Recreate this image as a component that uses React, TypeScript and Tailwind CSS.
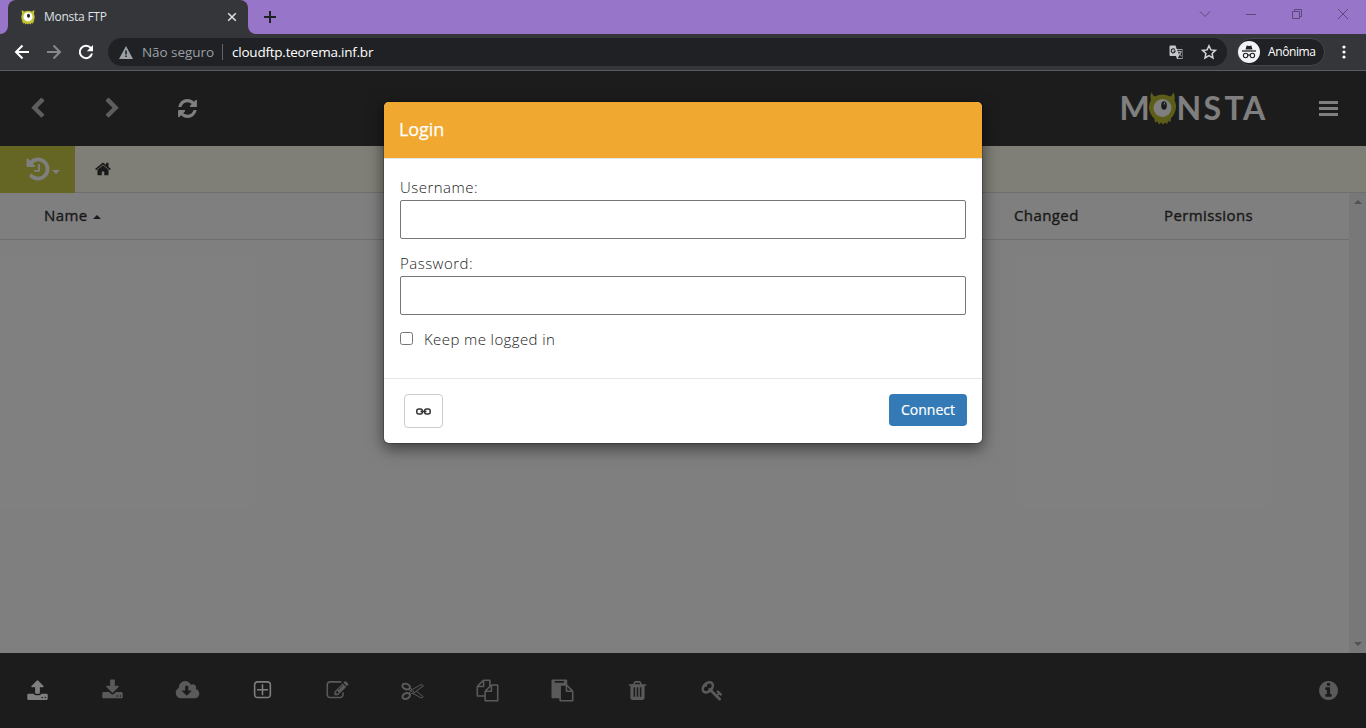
import { useState, type FormEvent, type ReactNode } from "react";
import clsx from "clsx";

type GlyphProps = {
  d: string;
  size?: number;
  className?: string;
};

// ── Icon outlines (1792 grid) ───────────────────────────────────────────────
const ICONS = {
  chevronLeft:
    "M1427 301l-531 531 531 531q19 19 19 45t-19 45l-166 166q-19 19-45 19t-45-19l-742-742q-19-19-19-45t19-45l742-742q19-19 45-19t45 19l166 166q19 19 19 45t-19 45z",
  chevronRight:
    "M1363 877l-742 742q-19 19-45 19t-45-19l-166-166q-19-19-19-45t19-45l531-531-531-531q-19-19-19-45t19-45l166-166q19-19 45-19t45 19l742 742q19 19 19 45t-19 45z",
  refresh:
    "M1639 1056q0 5-1 7-64 268-268 434.5t-478 166.5q-146 0-282.5-55t-243.5-157l-129 129q-19 19-45 19t-45-19-19-45v-448q0-26 19-45t45-19h448q26 0 45 19t19 45-19 45l-137 137q71 66 161 102t187 36q134 0 250-65t186-179q11-17 53-117 8-23 30-23h192q13 0 22.5 9.5t9.5 22.5zm25-800v448q0 26-19 45t-45 19h-448q-26 0-45-19t-19-45 19-45l138-138q-148-137-349-137-134 0-250 65t-186 179q-11 17-53 117-8 23-30 23h-199q-13 0-22.5-9.5t-9.5-22.5v-7q65-268 270-434.5t480-166.5q146 0 284 55.5t245 156.5l130-129q19-19 45-19t45 19 19 45z",
  history:
    "M1664 896q0 156-61 298t-164 245-245 164-298 61q-172 0-327-72.5t-264-204.5q-7-10-6.5-22.5t8.5-20.5l137-138q10-9 25-9 16 2 23 12 73 95 179 147t225 52q104 0 198.5-40.5t163.5-109.5 109.5-163.5 40.5-198.5-40.5-198.5-109.5-163.5-163.5-109.5-198.5-40.5q-98 0-188 35.5t-160 101.5l137 138q31 30 14 69-17 40-59 40h-448q-26 0-45-19t-19-45v-448q0-42 40-59 39-17 69 14l130 129q107-101 244.5-156.5t284.5-55.5q156 0 298 61t245 164 164 245 61 298zm-640-288v448q0 14-9 23t-23 9h-320q-14 0-23-9t-9-23v-64q0-14 9-23t23-9h224v-352q0-14 9-23t23-9h64q14 0 23 9t9 23z",
  home: "M1472 992v480q0 26-19 45t-45 19h-384v-384h-256v384h-384q-26 0-45-19t-19-45v-480q0-1 .5-3t.5-3l575-474 575 474q1 2 1 6zm223-69l-62 74q-8 9-21 11h-3q-13 0-21-7l-692-577-692 577q-12 8-24 7-13-2-21-11l-62-74q-8-10-7-23.5t11-21.5l719-599q32-26 76-26t76 26l244 204v-195q0-14 9-23t23-9h192q14 0 23 9t9 23v408l219 182q10 8 11 21.5t-7 23.5z",
  upload:
    "M1344 1472q0-26-19-45t-45-19-45 19-19 45 19 45 45 19 45-19 19-45zm256 0q0-26-19-45t-45-19-45 19-19 45 19 45 45 19 45-19 19-45zm128-224v320q0 40-28 68t-68 28h-1472q-40 0-68-28t-28-68v-320q0-40 28-68t68-28h427q21 56 70.5 92t110.5 36h256q61 0 110.5-36t70.5-92h427q40 0 68 28t28 68zm-325-648q-17 40-59 40h-256v448q0 26-19 45t-45 19h-256q-26 0-45-19t-19-45v-448h-256q-42 0-59-40-17-39 14-69l448-448q18-19 45-19t45 19l448 448q31 30 14 69z",
  download:
    "M1344 1344q0-26-19-45t-45-19-45 19-19 45 19 45 45 19 45-19 19-45zm256 0q0-26-19-45t-45-19-45 19-19 45 19 45 45 19 45-19 19-45zm128-224v320q0 40-28 68t-68 28h-1472q-40 0-68-28t-28-68v-320q0-40 28-68t68-28h465l135 136q58 56 136 56t136-56l136-136h464q40 0 68 28t28 68zm-325-569q17 41-14 70l-448 448q-18 19-45 19t-45-19l-448-448q-31-29-14-70 17-39 59-39h256v-448q0-26 19-45t45-19h256q26 0 45 19t19 45v448h256q42 0 59 39z",
  cloudDownload:
    "M1216 928q0-14-9-23t-23-9h-224v-352q0-13-9.5-22.5t-22.5-9.5h-192q-13 0-22.5 9.5t-9.5 22.5v352h-224q-13 0-22.5 9.5t-9.5 22.5q0 14 9 23l352 352q9 9 23 9t23-9l351-351q10-12 10-24zm640 224q0 159-112.5 271.5t-271.5 112.5h-1088q-185 0-316.5-131.5t-131.5-316.5q0-130 70-240t188-165q-2-30-2-43 0-212 150-362t362-150q156 0 285.5 87t188.5 231q71-62 166-62 106 0 181 75t75 181q0 76-41 138 130 31 213.5 135.5t83.5 238.5z",
  plusSquare:
    "M1344 800v64q0 14-9 23t-23 9h-352v352q0 14-9 23t-23 9h-64q-14 0-23-9t-9-23v-352h-352q-14 0-23-9t-9-23v-64q0-14 9-23t23-9h352v-352q0-14 9-23t23-9h64q14 0 23 9t9 23v352h352q14 0 23 9t9 23zm128 448v-832q0-66-47-113t-113-47h-832q-66 0-113 47t-47 113v832q0 66 47 113t113 47h832q66 0 113-47t47-113zm128-832v832q0 119-84.5 203.5t-203.5 84.5h-832q-119 0-203.5-84.5t-84.5-203.5v-832q0-119 84.5-203.5t203.5-84.5h832q119 0 203.5 84.5t84.5 203.5z",
  edit: "M888 1184l116-116-152-152-116 116v56h96v96h56zm440-720q-16-16-33 1l-350 350q-17 17-1 33t33-1l350-350q17-17 1-33zm80 594v190q0 119-84.5 203.5t-203.5 84.5h-832q-119 0-203.5-84.5t-84.5-203.5v-832q0-119 84.5-203.5t203.5-84.5h832q63 0 117 25 15 7 18 23 3 17-9 29l-49 49q-14 14-32 8-23-6-45-6h-832q-66 0-113 47t-47 113v832q0 66 47 113t113 47h832q66 0 113-47t47-113v-126q0-13 9-22l64-64q15-15 35-7t20 29zm-96-738l288 288-672 672h-288v-288zm444 132l-92 92-288-288 92-92q28-28 68-28t68 28l152 152q28 28 28 68t-28 68z",
  scissors:
    "M960 896q26 0 45 19t19 45-19 45-45 19-45-19-19-45 19-45 45-19zm300 64l507 398q28 20 25 56-5 35-35 51l-128 64q-13 7-29 7-17 0-31-8l-690-387-110 66q-8 4-12 5 14 49 10 97-7 77-56 147.5t-132 123.5q-132 84-277 84-136 0-222-78-90-84-79-207 7-76 56-147t131-124q132-84 278-84 83 0 151 31 9-13 22-22l122-73-122-73q-13-9-22-22-68 31-151 31-146 0-278-84-82-53-131-124t-56-147q-5-59 15.5-113t63.5-93q85-79 222-79 145 0 277 84 83 52 132 123t56 148q4 48-10 97 4 1 12 5l110 66 690-387q14-8 31-8 16 0 29 7l128 64q30 16 35 51 3 36-25 56zm-681-260q46-42 21-108t-106-117q-92-59-192-59-74 0-113 36-46 42-21 108t106 117q92 59 192 59 74 0 113-36zm-85 745q81-51 106-117t-21-108q-39-36-113-36-100 0-192 59-81 51-106 117t21 108q39 36 113 36 100 0 192-59zm178-613l96 58v-11q0-36 33-56l14-8-79-44-26 26q-3 3-10 11t-12 12q-2 2-4 3.5t-3 2.5zm224 224l96 32 736-576-128-64-768 431v113l-160 96 9 8q2 2 7 6 4 4 11 12t11 12l26 26zm704 416l128-64-520-408-177 138q-2 3-13 7z",
  copy: "M1696 384q40 0 68 28t28 68v1216q0 40-28 68t-68 28h-960q-40 0-68-28t-28-68v-288h-544q-40 0-68-28t-28-68v-672q0-40 20-88t48-76l408-408q28-28 76-48t88-20h416q40 0 68 28t28 68v328q68-40 128-40h416zm-544 213l-299 299h299v-299zm-640-384l-299 299h299v-299zm196 647l316-316v-416h-384v416q0 40-28 68t-68 28h-416v640h512v-256q0-40 20-88t48-76zm956 804v-1152h-384v416q0 40-28 68t-68 28h-416v640h896z",
  paste:
    "M768 1664h896v-640h-416q-40 0-68-28t-28-68v-416h-384v1152zm256-1440v-64q0-13-9.5-22.5t-22.5-9.5h-704q-13 0-22.5 9.5t-9.5 22.5v64q0 13 9.5 22.5t22.5 9.5h704q13 0 22.5-9.5t9.5-22.5zm256 672h299l-299-299v299zm512 128v672q0 40-28 68t-68 28h-960q-40 0-68-28t-28-68v-160h-544q-40 0-68-28t-28-68v-1344q0-40 28-68t68-28h1088q40 0 68 28t28 68v328q21 13 36 28l408 408q28 28 48 76t20 88z",
  trash:
    "M704 1376v-704q0-14-9-23t-23-9h-64q-14 0-23 9t-9 23v704q0 14 9 23t23 9h64q14 0 23-9t9-23zm256 0v-704q0-14-9-23t-23-9h-64q-14 0-23 9t-9 23v704q0 14 9 23t23 9h64q14 0 23-9t9-23zm256 0v-704q0-14-9-23t-23-9h-64q-14 0-23 9t-9 23v704q0 14 9 23t23 9h64q14 0 23-9t9-23zm-544-992h448l-48-117q-7-9-17-11h-317q-10 2-17 11zm928 32v64q0 14-9 23t-23 9h-96v948q0 83-47 143.5t-113 60.5h-832q-66 0-113-58.5t-47-141.5v-952h-96q-14 0-23-9t-9-23v-64q0-14 9-23t23-9h309l70-167q15-37 54-63t79-26h320q40 0 79 26t54 63l70 167h309q14 0 23 9t9 23z",
  key: "M832 512q0-80-56-136t-136-56-136 56-56 136q0 42 19 83-41-19-83-19-80 0-136 56t-56 136 56 136 136 56 136-56 56-136q0-42-19-83 41 19 83 19 80 0 136-56t56-136zm851 704q0 17-49 66t-66 49q-9 0-28.5-16t-36.5-33-38.5-40-24.5-26l-96 96 220 220q28 28 28 68 0 42-39 81t-81 39q-40 0-68-28l-671-671q-176 131-365 131-163 0-265.5-102.5t-102.5-265.5q0-160 95-313t248-248 313-95q163 0 265.5 102.5t102.5 265.5q0 189-131 365l355 355 96-96q-3-3-26-24.5t-40-38.5-33-36.5-16-28.5q0-17 49-66t66-49q13 0 23 10 6 6 46 44.5t82 79.5 86.5 86 73 78 28.5 41z",
  info: "M1152 1376v-160q0-14-9-23t-23-9h-96v-512q0-14-9-23t-23-9h-320q-14 0-23 9t-9 23v160q0 14 9 23t23 9h96v320h-96q-14 0-23 9t-9 23v160q0 14 9 23t23 9h448q14 0 23-9t9-23zm-128-896v-160q0-14-9-23t-23-9h-192q-14 0-23 9t-9 23v160q0 14 9 23t23 9h192q14 0 23-9t9-23zm640 416q0 209-103 385.5t-279.5 279.5-385.5 103-385.5-103-279.5-279.5-103-385.5 103-385.5 279.5-279.5 385.5-103 385.5 103 279.5 279.5 103 385.5z",
};

// Half a pixel of room on each side keeps 22px icons centred in odd-width slots.
function Glyph({ d, size = 23, className }: GlyphProps) {
  return (
    <svg
      width={size}
      height={size}
      viewBox="-41 -41 1874 1874"
      fill="currentColor"
      className={clsx("shrink-0 overflow-visible", className)}
    >
      <path d={d} />
    </svg>
  );
}

// ── Browser chrome ──────────────────────────────────────────────────────────
function TabStrip() {
  return (
    <div className="flex h-[34px] items-stretch bg-[#9775c8]">
      <svg width="8" height="34" className="shrink-0">
        <path d="M8 26a8 8 0 0 1-8 8h8z" fill="#35363a" />
      </svg>
      <div className="flex w-[240px] items-center rounded-t-lg bg-[#35363a] pl-3 pr-[11px]">
        <svg width="16" height="16" viewBox="0 0 16 16">
          <path
            d="M1.6 1l2.6 1.6Q8 .8 11.800 2.600L14.400 1l-.4 3.800q1.700 3.600 0 6.800l-1 2.900-1.500-.6-1 1.600-1.300-.9-1.200 1-1.200-1-1.300.9-1-1.600-1.500.6-1-2.900q-1.700-3.200 0-6.800z"
            fill="#bfc233"
          />
          <circle cx="8" cy="7.800" r="4.600" fill="#fff" />
          <ellipse cx="8.500" cy="6.800" rx="1.500" ry="2" fill="#222" />
        </svg>
        <span className="ml-2 flex-1 text-[12px] tracking-[-0.25px] text-[#dee1e6]">
          Monsta FTP
        </span>
        <svg width="10" height="10" stroke="#dee1e6" strokeWidth="1.500">
          <path d="M1.200 1.200l7.600 7.600M8.800 1.200l-7.600 7.600" />
        </svg>
      </div>
      <svg width="8" height="34" className="shrink-0">
        <path d="M0 26a8 8 0 0 0 8 8H0z" fill="#35363a" />
      </svg>
      <svg
        width="12"
        height="12"
        stroke="#202124"
        strokeWidth="2"
        className="ml-2 mt-[11px]"
      >
        <path d="M6 0v12M0 6h12" />
      </svg>
      <div className="ml-auto flex items-start gap-[34px] pr-[17px] pt-2 text-[#5d487c]">
        <svg width="12" height="12" fill="none" stroke="currentColor">
          <path d="M1 3.500l5 5 5-5" />
        </svg>
        <svg width="12" height="12" fill="none" stroke="currentColor">
          <path d="M1 6.500h10" />
        </svg>
        <svg width="12" height="12" fill="none" stroke="currentColor">
          <path d="M1.500 3.500h7v7h-7zM3.500 3.500v-2h7v7h-2" />
        </svg>
        <svg width="12" height="12" fill="none" stroke="currentColor">
          <path d="M1 1l10 10M11 1L1 11" />
        </svg>
      </div>
    </div>
  );
}

function AddressBar() {
  return (
    <div className="flex h-[37px] items-center border-b border-[#5b5c60] bg-[#35363a] pl-[14px] pr-5">
      <svg width="16" height="16" fill="none" stroke="#fff" strokeWidth="2">
        <path d="M15 8H2M8.500 1.500L2 8l6.500 6.500" />
      </svg>
      <svg
        width="16"
        height="16"
        fill="none"
        stroke="#87888b"
        strokeWidth="2"
        className="ml-4"
      >
        <path d="M1 8h13M7.500 1.500L14 8l-6.500 6.500" />
      </svg>
      <svg width="16" height="16" fill="none" className="ml-4">
        <path
          d="M12.800 4A6.200 6.200 0 1 0 14 9.500"
          stroke="#fff"
          strokeWidth="2"
        />
        <path d="M15 1v6.200H8.800z" fill="#fff" />
      </svg>
      <div className="ml-[14px] flex h-7 flex-1 items-center rounded-full bg-[#202124] pl-[11px] pr-[10px]">
        <svg width="14" height="13" className="shrink-0">
          <path d="M7 0l7 13H0z" fill="#9aa0a6" />
          <path d="M6.200 4.500h1.600v4H6.200zM6.200 9.500h1.600v1.600H6.200z" fill="#202124" />
        </svg>
        <span className="ml-[9px] text-[13.500px] tracking-[-0.05px] text-[#9aa0a6]">
          Não seguro
        </span>
        <span className="ml-2 h-4 w-px bg-[#5f6368]" />
        <span className="ml-[9px] text-[13.500px] tracking-[-0.23px] text-white">
          cloudftp.teorema.inf.br
        </span>
        <svg width="15" height="15" className="ml-auto">
          <path d="M1.500.5h5l1.200 3.500h5.800v10H8L7 11H1.500a1 1 0 0 1-1-1V1.500a1 1 0 0 1 1-1z" fill="#c4c7cb" />
          <path d="M8.200 4.700h5v8.600h-4.500l1.500-2.800z" fill="#202124" />
          <path d="M8.800 6.700h4M10.800 5.700v1M12 7q-.7 2.600-2.600 3.800M9.800 8q1 2 2.800 3" stroke="#c4c7cb" fill="none" strokeWidth=".9" />
          <path d="M5.800 4.600A2 2 0 1 0 6.200 6H4.500" stroke="#202124" fill="none" strokeWidth="1.100" />
        </svg>
        <svg
          width="16"
          height="16"
          fill="none"
          stroke="#d0d3d7"
          strokeWidth="1.500"
          className="ml-[17px]"
        >
          <path d="M8 1.800l1.900 4.100 4.500.5-3.300 3.100.9 4.500-4-2.300L4 14l.9-4.500L1.600 6.400l4.500-.5z" />
        </svg>
      </div>
      <div className="ml-[10px] flex h-7 w-[88px] shrink-0 items-center rounded-full border border-[#45464a] bg-[#202124]">
        <svg width="22" height="22" className="shrink-0">
          <circle cx="11" cy="11" r="11" fill="#f1f3f4" />
          <path d="M7.500 8.500l1.200-4 2.300.6 2.300-.6 1.200 4z" fill="#202124" />
          <path d="M4 10h14" stroke="#202124" strokeWidth="1.300" />
          <g fill="none" stroke="#202124" strokeWidth="1.100">
            <circle cx="7.600" cy="14.500" r="2.200" />
            <circle cx="14.400" cy="14.500" r="2.200" />
            <path d="M9.800 14.300q1.200-.8 2.400 0" />
          </g>
        </svg>
        <span className="ml-2 text-[12px] font-medium tracking-[-0.4px] text-white">
          Anônima
        </span>
      </div>
      <svg width="4" height="16" fill="#fff" className="ml-[17px] shrink-0">
        <circle cx="2" cy="3" r="1.600" />
        <circle cx="2" cy="8" r="1.600" />
        <circle cx="2" cy="13" r="1.600" />
      </svg>
    </div>
  );
}

// ── File manager ────────────────────────────────────────────────────────────
function Logo() {
  return (
    <svg width="154" height="47" viewBox="-4 -7 154 47">
      <g
        fill="#fff"
        fontSize="32"
        className="font-['Lato','Open_Sans',sans-serif] font-bold"
      >
        <text x="-1.600" y="27.500">
          M
        </text>
        <text x="55.500 82.500 103.500 122" y="27.500">
          NSTA
        </text>
      </g>
      <path
        d="M31 0q0 3 3 4.500 7-4 15 0Q52 3 52 0q2.500 3 1.500 8.500 3 6 0 12.500-1 3-3.500 5l-.5 4-2-1-1.500 3-2-1.500-2 2-2-2-2 2-1.500-3-2.500 1-.5-3.500q-2.500-2.500-4-5.500-3.500-7 .5-13.500Q28.500 3 31 0z"
        fill="#b8bb30"
      />
      <circle cx="41.500" cy="16" r="9" fill="#fff" />
      <ellipse cx="43" cy="13.500" rx="2.800" ry="4.300" fill="#393939" />
      <path d="M43.500 10.500v2" stroke="#fff" />
    </svg>
  );
}

function ToolSlot({ children }: { children: ReactNode }) {
  return (
    <button
      type="button"
      className="flex h-[75px] w-[75px] shrink-0 items-center justify-center"
    >
      {children}
    </button>
  );
}

function TopBar() {
  return (
    <header className="flex h-[75px] items-center bg-[#393939] text-white">
      <ToolSlot>
        <Glyph d={ICONS.chevronLeft} className="text-[#bdbdbd]" />
      </ToolSlot>
      <ToolSlot>
        <Glyph d={ICONS.chevronRight} className="text-[#bdbdbd]" />
      </ToolSlot>
      <ToolSlot>
        <Glyph d={ICONS.refresh} />
      </ToolSlot>
      <div className="ml-auto">
        <Logo />
      </div>
      <svg width="19" height="15" fill="currentColor" className="ml-12 mr-7">
        <path d="M0 0h19v3H0zM0 6h19v3H0zM0 12h19v3H0z" />
      </svg>
    </header>
  );
}

function PathBar() {
  return (
    <div className="flex h-[47px] bg-[#ffffef]">
      <button
        type="button"
        className="flex w-[75px] items-center bg-[#cccc48] pb-px pl-6 text-white"
      >
        <Glyph d={ICONS.history} size={28} />
        <svg width="8" height="4" fill="currentColor" className="mt-1.5">
          <path d="M0 0h8L4 4z" />
        </svg>
      </button>
      <div className="flex flex-1 items-center border-b border-[#dcdcdc] pl-[19px] text-[#333]">
        <Glyph d={ICONS.home} size={18} />
      </div>
    </div>
  );
}

function FileList() {
  return (
    <div className="flex flex-1">
      <div className="flex-1 bg-white">
        <div className="flex h-[47px] items-center border-b border-[#dcdcdc] pb-[2px] pl-11 text-[15px] font-medium tracking-[0.4px] text-[#333] [-webkit-text-stroke:0.35px]">
          <span className="flex w-[970px] items-center">
            Name
            <svg width="8" height="4" fill="currentColor" className="ml-[5px] mt-1">
              <path d="M0 4h8L4 0z" />
            </svg>
          </span>
          <span className="w-[150px]">Changed</span>
          <span>Permissions</span>
        </div>
      </div>
      <div className="flex w-[17px] flex-col items-center justify-between bg-[#f1f1f1] py-[7px] text-[#a3a3a3]">
        <svg width="8" height="4" fill="currentColor">
          <path d="M0 4h8L4 0z" />
        </svg>
        <svg width="8" height="4" fill="currentColor">
          <path d="M0 0h8L4 4z" />
        </svg>
      </div>
    </div>
  );
}

function BottomBar() {
  return (
    <footer className="flex h-[75px] items-center bg-[#393939] text-[#b5b5b5]">
      <ToolSlot>
        <Glyph d={ICONS.upload} className="text-white" />
      </ToolSlot>
      <ToolSlot>
        <Glyph d={ICONS.download} />
      </ToolSlot>
      <ToolSlot>
        <Glyph d={ICONS.cloudDownload} />
      </ToolSlot>
      <ToolSlot>
        <Glyph d={ICONS.plusSquare} className="text-white" />
      </ToolSlot>
      <ToolSlot>
        <Glyph d={ICONS.edit} />
      </ToolSlot>
      <ToolSlot>
        <Glyph d={ICONS.scissors} />
      </ToolSlot>
      <ToolSlot>
        <Glyph d={ICONS.copy} />
      </ToolSlot>
      <ToolSlot>
        <Glyph d={ICONS.paste} />
      </ToolSlot>
      <ToolSlot>
        <Glyph d={ICONS.trash} />
      </ToolSlot>
      <ToolSlot>
        <Glyph d={ICONS.key} />
      </ToolSlot>
      <div className="ml-auto">
        <ToolSlot>
          <Glyph d={ICONS.info} />
        </ToolSlot>
      </div>
    </footer>
  );
}

// ── Login dialog ────────────────────────────────────────────────────────────
function LoginDialog() {
  const [username, setUsername] = useState("");
  const [password, setPassword] = useState("");
  const [keep, setKeep] = useState(false);

  const handleSubmit = (e: FormEvent<HTMLFormElement>) => {
    e.preventDefault();
  };

  return (
    <form
      onSubmit={handleSubmit}
      className="w-[600px] rounded-md border border-black/20 bg-white bg-clip-padding text-[15px] shadow-[0_5px_15px_rgba(0,0,0,0.5)]"
    >
      <div className="flex h-[57px] items-center rounded-t-[5px] border-b border-[#e5e5e5] bg-[#f0a830] px-[15px] pb-[2px]">
        <h4 className="text-[18px] font-medium tracking-[-0.1px] text-white [-webkit-text-stroke:0.25px]">
          Login
        </h4>
      </div>

      <div className="h-[219px] px-4 pt-[18px] font-light leading-[21px] tracking-[0.48px] text-[#222]">
        <label className="block">
          Username:
          <input
            type="text"
            className="mt-[2px] block h-[39px] w-full rounded-[2px] border border-[#767676] px-2"
            value={username}
            onChange={(e) => setUsername(e.target.value)}
          />
        </label>

        <label className="mt-[14px] block">
          Password:
          <input
            type="password"
            className="mt-[2px] block h-[39px] w-full rounded-[2px] border border-[#767676] px-2"
            value={password}
            onChange={(e) => setPassword(e.target.value)}
          />
        </label>

        <label className="mt-[14px] flex items-center tracking-[0.4px]">
          <input
            type="checkbox"
            className="mb-[2px] mr-[11px] size-[13px]"
            checked={keep}
            onChange={(e) => setKeep(e.target.checked)}
          />
          Keep me logged in
        </label>
      </div>

      <div className="flex h-[65px] items-start justify-between border-t border-[#e5e5e5] pl-5 pr-[15px] pt-[15px]">
        <button
          type="button"
          className="flex h-[34px] w-[39px] items-center justify-center rounded border border-[#ccc] text-[#333]"
        >
          <svg width="15" height="7" fill="none" stroke="currentColor" strokeWidth="1.500">
            <rect x=".8" y="1" width="5.600" height="5" rx="2" />
            <rect x="8.600" y="1" width="5.600" height="5" rx="2" />
            <path d="M4.500 3.500h6" />
          </svg>
        </button>
        <button
          type="submit"
          className="h-8 w-[78px] rounded bg-[#337ab7] pb-[2px] text-[14px] font-medium text-white [-webkit-text-stroke:0.2px]"
        >
          Connect
        </button>
      </div>
    </form>
  );
}

export default function App() {
  return (
    <div className="flex h-[728px] w-[1366px] flex-col overflow-hidden font-['Open_Sans','Noto_Sans',sans-serif]">
      <TabStrip />
      <AddressBar />
      <main className="relative flex flex-1 flex-col">
        <TopBar />
        <PathBar />
        <FileList />
        <BottomBar />
        <div className="absolute inset-0 flex items-start justify-center bg-black/50 pt-[30px]">
          <LoginDialog />
        </div>
      </main>
    </div>
  );
}
